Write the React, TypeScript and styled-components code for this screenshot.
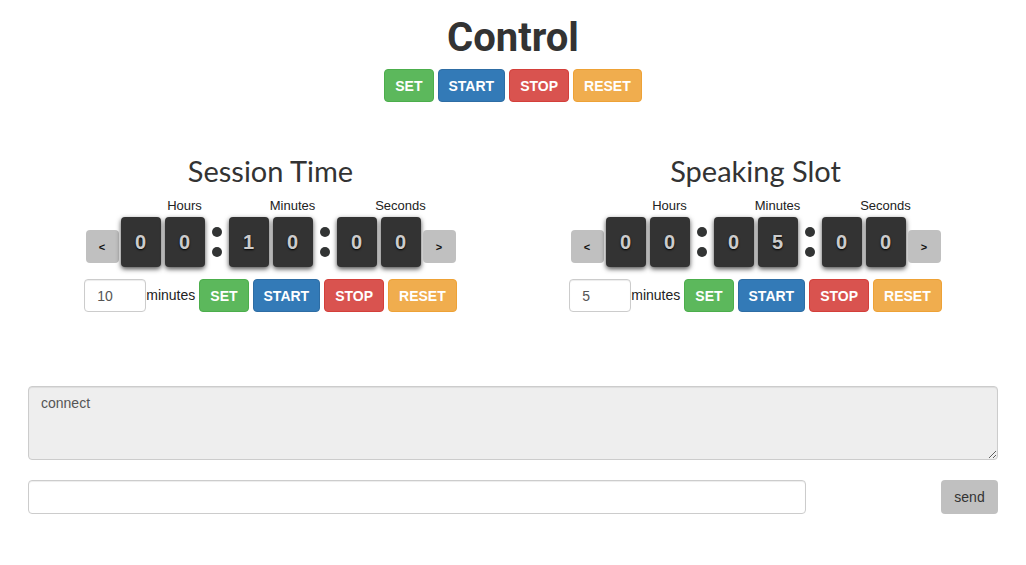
import React from "react";
import styled, { createGlobalStyle, css } from "styled-components";

const GlobalStyle = createGlobalStyle`
  * { box-sizing: border-box; }
  body {
    margin: 0;
    font-family: "Liberation Sans", Arial, sans-serif;
    font-size: 14px;
    line-height: 1.42857;
    color: #333;
    background: #fff;
  }
`;

const Page = styled.div`
  padding: 0 28px;
`;

const Title = styled.h1`
  margin: 16px 0 0;
  font-family: Roboto, "Liberation Sans", sans-serif;
  font-weight: 700;
  font-size: 40px;
  line-height: 44px;
  text-align: center;
  color: #333;
`;

const ButtonRow = styled.div<{ $top?: number }>`
  display: flex;
  justify-content: center;
  align-items: center;
  gap: 4px;
  margin-top: ${(p) => p.$top ?? 0}px;
`;

const variants = {
  set: css`background: #5cb85c; border-color: #4cae4c;`,
  start: css`background: #337ab7; border-color: #2e6da4;`,
  stop: css`background: #d9534f; border-color: #d43f3a;`,
  reset: css`background: #f0ad4e; border-color: #eea236;`,
};

type Variant = keyof typeof variants;

const Btn = styled.button<{ $v: Variant }>`
  height: 33px;
  padding: 0 10px;
  border: 1px solid transparent;
  border-radius: 4px;
  font-family: "Liberation Sans", Arial, sans-serif;
  font-size: 14px;
  font-weight: 700;
  color: #fff;
  cursor: pointer;
  ${(p) => variants[p.$v]}
`;

const Sections = styled.div`
  display: grid;
  grid-template-columns: 1fr 1fr;
  margin-top: 52px;
`;

const Section = styled.section`
  display: flex;
  flex-direction: column;
  align-items: center;
`;

const SectionTitle = styled.h2`
  margin: 0;
  font-family: Lato, "Noto Sans", sans-serif;
  font-weight: 400;
  font-size: 29px;
  line-height: 33px;
  color: #333;
`;

const Clock = styled.div`
  display: flex;
  align-items: flex-start;
  margin-top: 11px;
`;

const Arrow = styled.button`
  width: 33px;
  height: 33px;
  margin-top: 32px;
  padding: 0;
  border: none;
  border-radius: 4px;
  background: #c0c0c0;
  color: #111;
  font-family: "Liberation Sans", Arial, sans-serif;
  font-size: 11px;
  font-weight: 700;
  cursor: pointer;
`;

const Group = styled.div`
  display: flex;
  flex-direction: column;
  width: 84px;
`;

const Label = styled.div`
  display: flex;
  justify-content: center;
  width: 40px;
  margin-left: 44px;
  height: 15px;
  font-size: 13px;
  line-height: 15px;
  white-space: nowrap;
  color: #222;
`;

const Pair = styled.div`
  display: flex;
  gap: 4px;
  margin-top: 4px;
`;

const Tile = styled.div`
  width: 40px;
  height: 50px;
  display: flex;
  align-items: center;
  justify-content: center;
  border-radius: 4px;
  background: #333;
  box-shadow: 0 2px 5px rgba(0, 0, 0, 0.7);
  color: #ccc;
  font-family: "Liberation Sans", Arial, sans-serif;
  font-size: 20px;
  font-weight: 700;
  text-shadow: 0 1px 2px #000;
`;

const Colon = styled.div`
  width: 24px;
  height: 50px;
  margin-top: 19px;
  display: flex;
  flex-direction: column;
  align-items: center;
  justify-content: center;
  gap: 10px;
`;

const Dot = styled.span`
  width: 10px;
  height: 10px;
  border-radius: 50%;
  background: #323434;
`;

const Side = styled.div`
  width: 2px;
`;

const Controls = styled.div`
  display: flex;
  align-items: center;
  gap: 4px;
  margin-top: 12px;
`;

const MinuteField = styled.label`
  display: flex;
  align-items: center;
  font-size: 14px;
  color: #222;
`;

const SmallInput = styled.input`
  width: 62px;
  height: 33px;
  padding: 6px 12px;
  border: 1px solid #ccc;
  border-radius: 4px;
  box-shadow: inset 0 1px 1px rgba(0, 0, 0, 0.075);
  font-family: "Liberation Sans", Arial, sans-serif;
  font-size: 14px;
  color: #555;
`;

const Log = styled.textarea`
  display: block;
  width: 100%;
  height: 74px;
  margin-top: 74px;
  padding: 6px 12px;
  border: 1px solid #ccc;
  border-radius: 4px;
  background: #eee;
  box-shadow: inset 0 1px 1px rgba(0, 0, 0, 0.075);
  font-family: "Liberation Sans", Arial, sans-serif;
  font-size: 14px;
  line-height: 20px;
  color: #555;
`;

const SendRow = styled.div`
  display: flex;
  justify-content: space-between;
  align-items: center;
  margin-top: 20px;
`;

const MessageInput = styled.input`
  width: 778px;
  height: 34px;
  padding: 6px 12px;
  border: 1px solid #ccc;
  border-radius: 4px;
  box-shadow: inset 0 1px 1px rgba(0, 0, 0, 0.075);
  font-family: "Liberation Sans", Arial, sans-serif;
  font-size: 14px;
`;

const SendButton = styled.button`
  width: 57px;
  height: 34px;
  border: none;
  border-radius: 4px;
  background: #c0c0c0;
  color: #333;
  font-family: "Liberation Sans", Arial, sans-serif;
  font-size: 14px;
  cursor: pointer;
`;

const ActionButtons = () => (
  <>
    <Btn $v="set">SET</Btn>
    <Btn $v="start">START</Btn>
    <Btn $v="stop">STOP</Btn>
    <Btn $v="reset">RESET</Btn>
  </>
);

const DigitGroup = ({ label, digits }: { label: string; digits: string }) => (
  <Group>
    <Label>{label}</Label>
    <Pair>
      {digits.split("").map((d, i) => (
        <Tile key={i}>{d}</Tile>
      ))}
    </Pair>
  </Group>
);

const Separator = () => (
  <Colon>
    <Dot />
    <Dot />
  </Colon>
);

const Timer = ({ title, time, minutes }: { title: string; time: [string, string, string]; minutes: string }) => (
  <Section>
    <SectionTitle>{title}</SectionTitle>
    <Clock>
      <Arrow>&lt;</Arrow>
      <Side />
      <DigitGroup label="Hours" digits={time[0]} />
      <Separator />
      <DigitGroup label="Minutes" digits={time[1]} />
      <Separator />
      <DigitGroup label="Seconds" digits={time[2]} />
      <Side />
      <Arrow>&gt;</Arrow>
    </Clock>
    <Controls>
      <MinuteField>
        <SmallInput defaultValue={minutes} />
        minutes
      </MinuteField>
      <ActionButtons />
    </Controls>
  </Section>
);

export default function App() {
  return (
    <Page>
      <GlobalStyle />
      <Title>Control</Title>
      <ButtonRow $top={9}>
        <ActionButtons />
      </ButtonRow>
      <Sections>
        <Timer title="Session Time" time={["00", "10", "00"]} minutes="10" />
        <Timer title="Speaking Slot" time={["00", "05", "00"]} minutes="5" />
      </Sections>
      <Log readOnly value="connect" />
      <SendRow>
        <MessageInput />
        <SendButton>send</SendButton>
      </SendRow>
    </Page>
  );
}
